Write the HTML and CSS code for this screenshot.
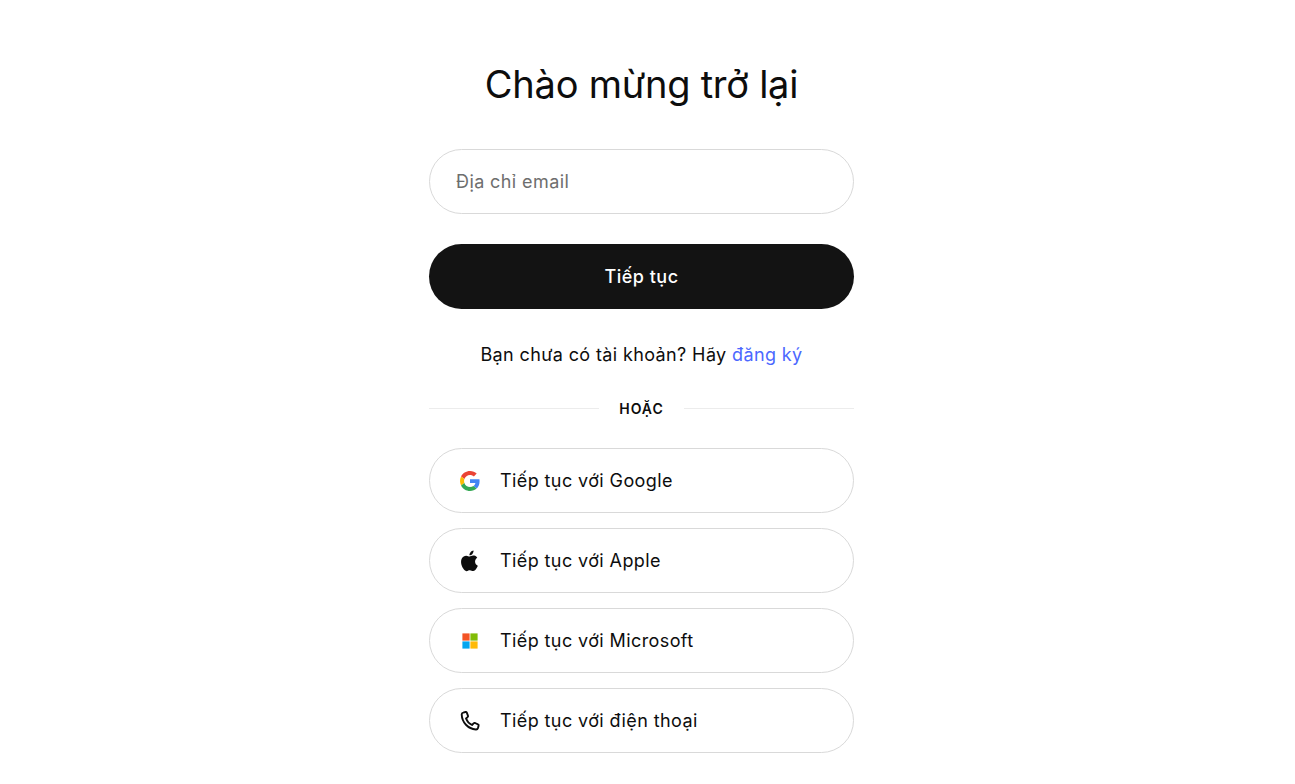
FILE: index.html
```html
<!DOCTYPE html>
<html lang="vi">
<head>
<meta charset="utf-8">
<title>Chào mừng trở lại</title>
<link rel="stylesheet" href="styles.css">
</head>
<body>
<main class="card">
  <h1 class="title">Chào mừng trở lại</h1>
  <form class="form">
    <input class="email" type="text" placeholder="Địa chỉ email">
    <button class="primary" type="button">Tiếp tục</button>
  </form>
  <p class="signup">Bạn chưa có tài khoản? Hãy <a class="link" href="#">đăng ký</a></p>
  <div class="divider"><span class="rule"></span><span class="or">HOẶC</span><span class="rule"></span></div>
  <div class="socials">
    <button class="social" type="button">
      <span class="icon"><svg width="20" height="20" viewBox="0 0 48 48"><path fill="#EA4335" d="M24 9.5c3.54 0 6.71 1.22 9.21 3.6l6.85-6.85C35.9 2.38 30.47 0 24 0 14.62 0 6.51 5.38 2.56 13.22l7.98 6.19C12.43 13.72 17.74 9.5 24 9.5z"/><path fill="#4285F4" d="M46.98 24.55c0-1.57-.15-3.09-.38-4.55H24v9.02h12.94c-.58 2.96-2.26 5.48-4.78 7.18l7.73 6c4.51-4.18 7.09-10.36 7.09-17.65z"/><path fill="#FBBC05" d="M10.53 28.59c-.48-1.45-.76-2.99-.76-4.59s.27-3.14.76-4.59l-7.98-6.19C.92 16.46 0 20.12 0 24c0 3.88.92 7.54 2.56 10.78l7.97-6.19z"/><path fill="#34A853" d="M24 48c6.48 0 11.93-2.13 15.89-5.81l-7.73-6c-2.15 1.45-4.92 2.3-8.16 2.3-6.26 0-11.57-4.22-13.47-9.91l-7.98 6.19C6.51 42.62 14.62 48 24 48z"/></svg></span>
      <span>Tiếp tục với Google</span>
    </button>
    <button class="social" type="button">
      <span class="icon"><svg width="24" height="24" viewBox="0 0 24 24"><path fill="#0d0d0d" d="M17.05 12.54c-.03-2.6 2.12-3.85 2.22-3.91-1.21-1.77-3.09-2.01-3.76-2.04-1.6-.16-3.12.94-3.93.94-.81 0-2.06-.92-3.39-.89-1.74.03-3.35 1.01-4.25 2.57-1.81 3.14-.46 7.79 1.3 10.34.86 1.25 1.89 2.65 3.24 2.6 1.3-.05 1.79-.84 3.36-.84 1.57 0 2.01.84 3.39.81 1.4-.02 2.28-1.27 3.14-2.53.99-1.45 1.4-2.86 1.42-2.93-.03-.01-2.71-1.04-2.74-4.12zM14.47 4.9c.72-.87 1.2-2.08 1.07-3.28-1.03.04-2.28.69-3.02 1.55-.66.77-1.24 2-1.09 3.18 1.15.09 2.33-.59 3.04-1.45z"/></svg></span>
      <span>Tiếp tục với Apple</span>
    </button>
    <button class="social" type="button">
      <span class="icon"><svg width="16" height="16" viewBox="0 0 16 16"><rect x="0.4" y="0.4" width="7.2" height="7.2" fill="#F35325"/><rect x="8.4" y="0.4" width="7.2" height="7.2" fill="#81BC06"/><rect x="0.4" y="8.4" width="7.2" height="7.2" fill="#05A6F0"/><rect x="8.4" y="8.4" width="7.2" height="7.2" fill="#FFBA08"/></svg></span>
      <span>Tiếp tục với Microsoft</span>
    </button>
    <button class="social" type="button">
      <span class="icon"><svg width="24" height="24" viewBox="0 0 24 24" fill="none" stroke="#0d0d0d" stroke-width="1.9" stroke-linejoin="round"><path d="M5.2 3.6l2.3-.6c.6-.1 1.1.2 1.3.7l1.2 3.1c.2.5 0 1-.4 1.3L8 9.5c1 2.6 3.3 5.2 6 6.5l1.6-1.7c.4-.4.9-.5 1.4-.3l3 1.4c.5.2.8.8.6 1.4l-.7 2.3c-.3.9-1.1 1.5-2 1.4C10 19.900 4 13.500 3.700 5.500c0-.9.600-1.700 1.500-1.900z"/></svg></span>
      <span>Tiếp tục với điện thoại</span>
    </button>
  </div>
</main>
</body>
</html>
```
FILE: styles.css
```css
* { box-sizing: border-box; }
html, body { margin: 0; background: #fff; }
body {
  font-family: Inter, "Liberation Sans", sans-serif;
  color: #0d0d0d;
  display: flex;
  justify-content: center;
  padding-right: 12px;
}
.card { width: 425px; display: flex; flex-direction: column; padding-top: 61px; }
.title {
  margin: 0 0 41px;
  font-size: 38px;
  line-height: 47px;
  font-weight: 400;
  text-align: center;
  letter-spacing: -0.25px;
}
.form { display: flex; flex-direction: column; gap: 30px; }
.email {
  height: 65px;
  border: 1px solid #d9d9d9;
  border-radius: 33px;
  padding: 0 26px;
  font: 400 18px Inter, sans-serif;
  letter-spacing: 0.4px;
  color: #0d0d0d;
  outline: none;
  background: #fff;
}
.email::placeholder { color: #6e6e6e; opacity: 1; }
.primary {
  height: 65px;
  border: 0;
  border-radius: 33px;
  background: #131313;
  color: #fff;
  font: 500 18px Inter, sans-serif;
  letter-spacing: 0.5px;
}
.signup { margin: 34px 0 0; font-size: 18px; line-height: 24px; text-align: center; letter-spacing: 0.38px; }
.link { color: #4b68ff; text-decoration: none; }
.divider { display: flex; align-items: center; margin-top: 29px; height: 24px; }
.rule { flex: 1; height: 1px; background: #ececec; }
.or { padding: 0 20px; font-size: 14px; font-weight: 600; letter-spacing: 1px; }
.socials { display: flex; flex-direction: column; gap: 15px; margin-top: 28px; }
.social {
  height: 65px;
  border: 1px solid #d9d9d9;
  border-radius: 33px;
  background: #fff;
  color: #0d0d0d;
  display: flex;
  align-items: center;
  gap: 20px;
  padding: 0 0 0 30px;
  font: 400 18px Inter, sans-serif;
  letter-spacing: 0.4px;
  text-align: left;
}
.icon { width: 20px; height: 20px; display: flex; align-items: center; justify-content: center; }
.icon svg { flex: none; }
```
